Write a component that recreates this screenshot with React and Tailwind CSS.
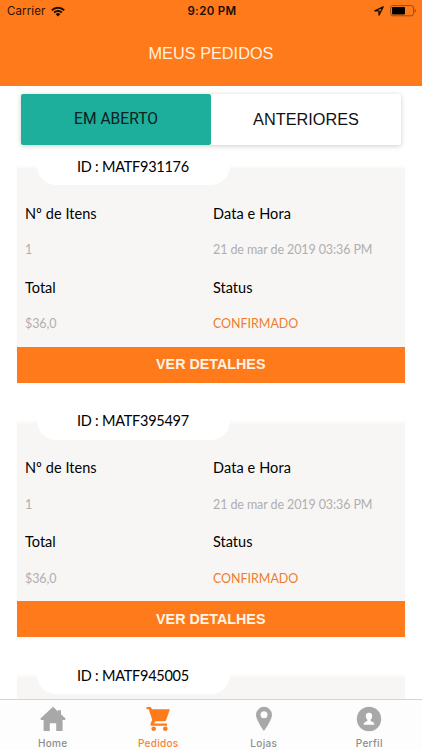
const orders = [
  { id: "MATF931176", details: { items: "1", date: "21 de mar de 2019 03:36 PM", total: "$36,0", status: "CONFIRMADO" } },
  { id: "MATF395497", details: { items: "1", date: "21 de mar de 2019 03:36 PM", total: "$36,0", status: "CONFIRMADO" } },
  { id: "MATF945005" },
];

function StatusBar() {
  return (
    <div className="grid h-[22px] grid-cols-3 items-center pl-[7px] pr-[5px] font-['Inter',sans-serif] text-[#2b1200]">
      <div className="flex items-center gap-[6px]">
        <span className="mt-px text-[11.5px] tracking-[0.1px]">Carrier</span>
        <svg width="14" height="11" viewBox="0 0 15 11" fill="none" stroke="#1c0d00" strokeWidth="2.1">
          <path d="M.9 4.1a9.4 9.4 0 0 1 13.2 0" />
          <path d="M3.3 6.6a6 6 0 0 1 8.4 0" />
          <path d="M7.5 10.8 5 8.4a3.4 3.4 0 0 1 5 0z" fill="#1c0d00" stroke="none" />
        </svg>
      </div>
      <span className="mt-px text-center text-[11.5px] font-semibold tracking-[0.35px] text-[#1c0d00]">9:20 PM</span>
      <div className="flex items-center justify-end gap-[6px]">
        <svg width="10" height="10" viewBox="0 0 10 10" fill="none" stroke="#1c0d00" strokeWidth="1.3" strokeLinejoin="round">
          <path d="M9.2.8.8 4.8h4.2v4.3z" />
        </svg>
        <svg width="27" height="12" viewBox="0 0 27 12">
          <rect x=".6" y=".6" width="23" height="10.2" rx="2.4" fill="none" stroke="#9b4a12" />
          <rect x="2" y="2" width="13" height="7.4" rx=".8" fill="#000" />
          <path d="M24.7 4v3.6q1.3-.5 1.3-1.8t-1.3-1.8" fill="#9b4a12" />
        </svg>
      </div>
    </div>
  );
}

function OrderDetails({ details }) {
  return (
    <>
      <div className="mt-[10px] grid grow grid-cols-[188px_1fr] auto-rows-[37px] items-center pl-[8.5px] text-[14.5px] text-black">
        <span className="tracking-[0.05px]">Nº de Itens</span>
        <span className="tracking-[0.1px]">Data e Hora</span>
        <span className="text-[12.5px] text-[#b0afaf]">{details.items}</span>
        <span className="text-[12.5px] tracking-[-0.1px] text-[#b0afaf]">{details.date}</span>
        <span>Total</span>
        <span>Status</span>
        <span className="text-[12.5px] tracking-[-0.1px] text-[#b0afaf]">{details.total}</span>
        <span className="text-[12.5px] tracking-[-0.05px] text-[#ef7d2d]">{details.status}</span>
      </div>
      <button className="h-[36px] shrink-0 bg-[#ff7a1a] pt-px font-['Liberation_Sans',Arial,sans-serif] text-[14.3px] font-bold text-[#fff4e5]">
        VER DETALHES
      </button>
    </>
  );
}

function OrderCard({ order }) {
  return (
    <article className="mb-[37px] flex h-[217.5px] shrink-0 flex-col bg-linear-to-b from-white to-[#f7f6f5] to-[4px] shadow-[0_1px_4px_rgba(0,0,0,0.025)]">
      <div className="-mt-[18px] ml-5 flex h-[38px] w-[193px] shrink-0 items-center justify-center rounded-full bg-white pt-px text-[14.5px] tracking-[-0.25px] text-black">
        ID : {order.id}
      </div>
      {order.details && <OrderDetails details={order.details} />}
    </article>
  );
}

function HomeIcon() {
  return (
    <svg width="26" height="26" viewBox="0 0 26 26" fill="#a8a8a8">
      <path d="M13 .8 18 5.4V4.2h3v4l4.8 4.5-1 1.3h-2.2V25h-6.4v-7.8h-6.4V25H3.6V14H1.2l-1-1.3z" />
    </svg>
  );
}

function CartIcon() {
  return (
    <svg width="26" height="26" viewBox="0 0 26 26" fill="#ff7a1a">
      <path d="M1.5 1h4.3l1.3 2.2h17.8l-3.7 10.7q-.5 1.3-1.9 1.3h-9.1l-1.2 2.2h13v2.4H7.3q-2.6-.2-1.5-2.9l1.5-2.8L3.7 3.3H1.5z" />
      <circle cx="8.7" cy="22.7" r="2.3" />
      <circle cx="20.3" cy="22.7" r="2.3" />
    </svg>
  );
}

function PinIcon() {
  return (
    <svg width="26" height="26" viewBox="0 0 26 26" fill="#a8a8a8">
      <path fillRule="evenodd" d="M13 .8a8 8 0 0 0-8 8C5 14.3 13 25 13 25s8-10.7 8-16.2a8 8 0 0 0-8-8m0 4.4a3.5 3.5 0 1 1 0 7 3.5 3.5 0 0 1 0-7" />
    </svg>
  );
}

function ProfileIcon() {
  return (
    <svg width="26" height="26" viewBox="0 0 26 26">
      <circle cx="13" cy="13" r="12.2" fill="#a8a8a8" />
      <path d="M13 6.7c-2.3 0-3.4 1.6-3.2 3.6.1 1.6.7 2.8 1.6 3.5v1.2c-2.5.8-3.8 1.7-3.8 3.8h10.8c0-2.1-1.3-3-3.8-3.8v-1.2c.9-.7 1.5-1.9 1.6-3.5.2-2-.9-3.6-3.2-3.6" fill="#fff" />
    </svg>
  );
}

const navItems = [
  { label: "Home", Icon: HomeIcon },
  { label: "Pedidos", Icon: CartIcon, active: true },
  { label: "Lojas", Icon: PinIcon },
  { label: "Perfil", Icon: ProfileIcon },
];

export default function App() {
  return (
    <div className="flex h-[750px] w-[422px] flex-col overflow-hidden bg-white font-['Lato',sans-serif]">
      <header className="h-[85.5px] shrink-0 bg-[#ff7a1a]">
        <StatusBar />
        <h1 className="mt-[19px] text-center font-['Liberation_Sans',Arial,sans-serif] text-[16.3px] leading-6 text-[#fff0df]">
          MEUS PEDIDOS
        </h1>
      </header>
      <div className="mx-[21px] mt-[8.5px] grid h-[50.5px] shrink-0 grid-cols-2 rounded-[2px] bg-white font-['Liberation_Sans',Arial,sans-serif] shadow-[0_1px_5px_rgba(0,0,0,0.2)]">
        <button className="rounded-[2px] bg-[#1eae9c] pt-px font-['Roboto',sans-serif] text-[15.6px] text-[#0b211d]">EM ABERTO</button>
        <button className="text-[16.3px] text-[#111]">ANTERIORES</button>
      </div>
      <main className="mt-[14px] flex min-h-0 grow flex-col overflow-hidden pl-[16.5px] pr-[17px] pt-[6.5px]">
        {orders.map((order) => (
          <OrderCard key={order.id} order={order} />
        ))}
      </main>
      <nav className="grid h-[51px] shrink-0 grid-cols-4 border-t border-[#d5d5d5] bg-[#fdfdfd]">
        {navItems.map(({ label, Icon, active }) => (
          <div key={label} className={`flex flex-col items-center pt-[6px] ${active ? "text-[#f58238]" : "text-[#8e8e8e]"}`}>
            <Icon />
            <span className="mt-[4px] font-['Inter',sans-serif] text-[10px] font-medium leading-[14px] tracking-[0.3px]">{label}</span>
          </div>
        ))}
      </nav>
    </div>
  );
}
